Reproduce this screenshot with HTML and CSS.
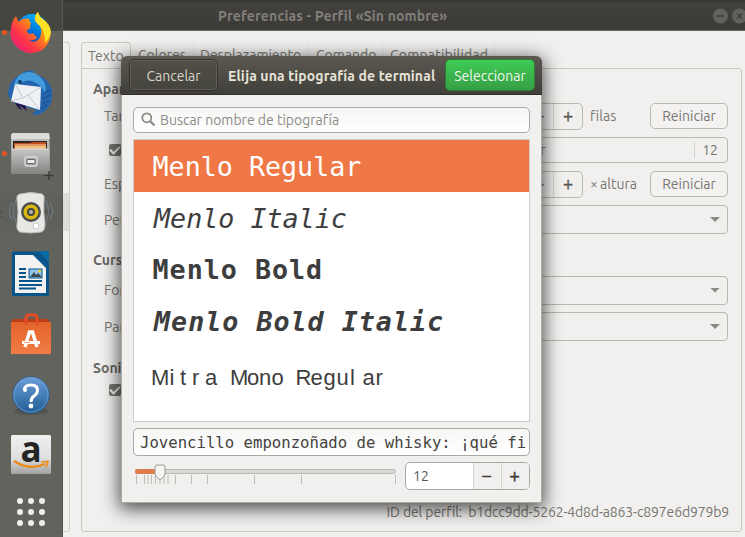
FILE: index.html
```html
<!DOCTYPE html>
<html lang="es">
<head>
<meta charset="utf-8">
<title>Preferencias</title>
<link rel="stylesheet" href="styles.css">
</head>
<body>
<div class="desktop">
  <div class="window">
    <header class="titlebar">
      <span class="window-title">Preferencias - Perfil «Sin nombre»</span>
      <svg class="window-buttons" width="32" height="16" viewBox="0 0 32 16"><circle cx="7.500" cy="8" r="7.500" fill="#62615b"/><circle cx="26.500" cy="8" r="7.500" fill="#62615b"/><path d="M4 8h7M24 5.500l5 5M29 5.500l-5 5" stroke="#3d3c38" stroke-width="1.400"/></svg>
    </header>
    <div class="content">
      <aside class="profiles"><div class="profile"><span>e</span><i class="arrow"></i></div></aside>
      <section class="notebook">
        <nav class="tabs"><span class="tab active">Texto</span><span class="tab t2">Colores</span><span class="tab t3">Desplazamiento</span><span class="tab t4">Comando</span><span class="tab t5">Compatibilidad</span></nav>
        <div class="page">
          <div class="row"><h2>Apariencia</h2></div>
          <div class="row"><label>Tamaño</label><div class="controls"><div class="spin back"><span></span><b>−</b><b>+</b></div><span class="unit">filas</span><button class="reset">Reiniciar</button></div></div>
          <div class="row"><i class="check"></i><div class="controls"><div class="font-button"><span>Menlo Regular</span><span class="size">12</span></div></div></div>
          <div class="row"><label>Espaciado</label><div class="controls"><div class="spin back"><span></span><b>−</b><b>+</b></div><span class="unit">× altura</span><button class="reset">Reiniciar</button></div></div>
          <div class="row"><label>Permitir</label><div class="combo"><i class="arrow"></i></div></div>
          <div class="row"><h2>Cursor</h2></div>
          <div class="row"><label>Forma</label><div class="combo"><i class="arrow"></i></div></div>
          <div class="row"><label>Parpadeo</label><div class="combo"><i class="arrow"></i></div></div>
          <div class="row"><h2>Sonido</h2></div>
          <div class="row"><i class="check"></i></div>
          <div class="profile-id"><span class="id-label">ID del perfil:</span><span class="id-value">b1dcc9dd-5262-4d8d-a863-c897e6d979b9</span></div>
        </div>
      </section>
    </div>
  </div>

  <aside class="launcher">
    <div class="app running"><svg width="46" height="48" viewBox="0 0 46 48">
      <defs><linearGradient id="fx" x1="0" y1="1" x2="1" y2="0"><stop offset="0" stop-color="#e31587"/><stop offset=".35" stop-color="#ff3647"/><stop offset=".65" stop-color="#ff980e"/><stop offset="1" stop-color="#fff44f"/></linearGradient><linearGradient id="fb" x1="0" y1="1" x2=".6" y2="0"><stop offset="0" stop-color="#26106f"/><stop offset=".5" stop-color="#0069d8"/><stop offset="1" stop-color="#00b2fa"/></linearGradient></defs>
      <circle cx="25" cy="21" r="16" fill="url(#fb)"/>
      <path d="M9 7Q10 10 11.500 13Q16 8 22 10Q22 12 24 14L23 17Q25 19 20 21Q20 25 24 25Q28 23 27 26Q30 27 30 29Q27 32 22 31Q27 35 32 30Q36 23 33 17L28 12Q27 6 31 3Q32 8 37 12Q43 18 43.500 26Q42 36 35 41Q24 48 12 40Q1 31 4 19Q5 12 9 7Z" fill="url(#fx)"/>
      <path d="M31 3Q27 7 29 13Q39 21 38 34Q43 29 44 23Q43 15 37 11Q32 8 31 3Z" fill="#ffe226"/>
    </svg></div>
    <div class="app"><svg width="46" height="46" viewBox="0 -1 46 46">
      <path d="M1 22Q2 10 14 4Q19 -1 28 1L25 3Q40 6 45 19Q47 34 38 41Q34 45 25 45L29 40L8 33Q1 29 1 22Z" fill="#2465ae"/>
      <path d="M14 4Q26-2 35 9Q40 15 38 23Q34 14 25 11Q18 9 12 15Q9 13 7 15Q9 7 14 4Z" fill="#419bdd"/><path d="M8 33Q11 39 15 40L12 35L20 41L18 35Z" fill="#21194e"/>
      <path d="M8 14L34 17L33 40L4 31Z" fill="#eef0f4"/><path d="M8 14L16 28L34 17M16 28L4 31M21 25L33 40" fill="none" stroke="#c5c9d1" stroke-width="1"/><circle cx="13" cy="12" r="2" fill="#153b68"/>
      <path d="M36 24l7-4M35 29l9-4M35 34l8-4M34 39l6-4" stroke="#194780" stroke-width="1"/>
    </svg></div>
    <div class="app running"><svg width="46" height="48" viewBox="0 -1 46 48">
      <defs><linearGradient id="cab" x2="0" y2="1"><stop stop-color="#c6c6c4"/><stop offset="1" stop-color="#858583"/></linearGradient></defs>
      <path d="M4 3h38l1 17v23H4Z" fill="url(#cab)"/><path d="M5 2h37l1 6H4Z" fill="#dcdcda"/><path d="M6 10h34v9H6Z" fill="#292522"/><path d="M7 12h16l2-1h14v8H7Z" fill="#c34b20"/><path d="M8 15h31v4H8Z" fill="#f5bd7d"/><path d="M8 14h31" stroke="#ffe0ac"/><path d="M5 18h37v24H5Z" fill="url(#cab)"/><path d="M5 18h37" stroke="#d8d8d6"/>
      <rect x="18" y="26" width="12" height="9" rx="2" fill="#a1a19f" stroke="#dedede" stroke-width="1.300"/><rect x="20" y="28.500" width="8" height="4" rx="1" fill="#eee" stroke="#666"/><path d="M42 40v9M37.500 44.500h9" stroke="#3c3b37" stroke-width="1.500"/>
    </svg></div>
    <div class="app"><svg width="46" height="46" viewBox="0 0 46 46">
      <g fill="none" stroke="#6f8090" stroke-width="1"><path d="M9 10Q4 21 9 32M5 12Q0 21 5 30M39 10Q44 21 39 32M43 12Q48 21 43 30"/></g>
      <path d="M13 4Q24 1 35 4Q38 5 37 10Q36 22 38 34Q38 41 34 42Q24 44 13 42Q9 40 10 34Q12 22 10 10Q9 5 13 4Z" fill="#e7e7e4" stroke="#bbb"/><circle cx="24" cy="22" r="10" fill="#4c4e50"/><circle cx="24" cy="22" r="7.500" fill="#d9b90d"/><circle cx="24" cy="22" r="4" fill="#45483c"/><circle cx="24" cy="22" r="2" fill="#b1b4b8"/><circle cx="29" cy="36" r="3" fill="#fff" stroke="#ccc"/>
    </svg></div>
    <div class="app"><svg width="46" height="48" viewBox="0 0 46 48">
      <path d="M7 1.500h25L42 12v32q0 2-2 2H7q-2 0-2-2V3.500q0-2 2-2Z" fill="#07558b"/><path d="M31 1h11v11Z" fill="#0769a5"/><path d="M8 5h18l13 13v25H8Z" fill="#f2f2f2"/>
      <path d="M12 19h7M12 23h7M12 27h7M12 31h23M12 35h23M12 38.500h17" stroke="#07558b" stroke-width="2"/><rect x="22" y="19" width="13" height="9" fill="#8fc5eb" stroke="#07558b"/><path d="M23 27l4-5 2 3 2-2 4 4Z" fill="#3e4a50"/><circle cx="32.500" cy="21" r="1.500" fill="#f4cf2d"/>
    </svg></div>
    <div class="app"><svg width="46" height="46" viewBox="0 -2 46 46">
      <defs><linearGradient id="bag" x2="0" y2="1"><stop stop-color="#e36328"/><stop offset="1" stop-color="#f17c46"/></linearGradient></defs>
      <path d="M6 7h35l2 4H4Z" fill="#b93d17"/><path d="M4 10h40v32H4Z" fill="url(#bag)"/><path d="M19 13V6q0-3 3-3h5q3 0 3 3v7" fill="none" stroke="#e44c24" stroke-width="3"/><path d="M18 35L22.500 20h3L30 35" fill="none" stroke="#fff" stroke-width="3.500"/><path d="M15 30.500h18" stroke="#fff" stroke-width="3"/><path d="M17 30.500h6" stroke="#f7a27b" stroke-width="1"/>
    </svg></div>
    <div class="app"><svg width="46" height="46" viewBox="0 -2 46 46">
      <defs><linearGradient id="help" x2="0" y2="1"><stop stop-color="#6b9fd9"/><stop offset="1" stop-color="#225e96"/></linearGradient></defs>
      <ellipse cx="24" cy="38" rx="17" ry="4" fill="#464540" opacity=".5"/><circle cx="24" cy="22" r="18.300" fill="url(#help)" stroke="#245687" stroke-width=".7"/><circle cx="24" cy="22" r="17" fill="none" stroke="#76a7d9" stroke-width=".7"/>
      <path d="M17.500 17.500Q17 12 24 12Q30.500 12 30.500 17Q30.500 20.500 27 23Q24 25 24 29" fill="none" stroke="#fff" stroke-width="3"/><circle cx="18" cy="17" r="2" fill="#fff"/><circle cx="24" cy="33" r="2.400" fill="#fff"/>
    </svg></div>
    <div class="app"><svg width="46" height="46" viewBox="0 -2 46 46">
      <defs><linearGradient id="amz" x2="0" y2="1"><stop stop-color="#f0f0f0"/><stop offset=".6" stop-color="#dedede"/><stop offset="1" stop-color="#a2a2a2"/></linearGradient></defs>
      <rect x="4" y="2" width="40" height="39" rx="1.500" fill="url(#amz)"/><text class="amazon-a" x="13.500" y="28.500">a</text>
      <path d="M7 28Q22 38 38 31" fill="none" stroke="#ed8c16" stroke-width="2.300"/><path d="M34 29l7-.5-2 6" fill="none" stroke="#ed8c16" stroke-width="1.700"/>
    </svg></div>
    <div class="app"><svg width="46" height="46" viewBox="0 1 46 46" fill="#f0efed"><circle cx="13" cy="11" r="3"/><circle cx="24" cy="11" r="3"/><circle cx="35" cy="11" r="3"/><circle cx="13" cy="22" r="3"/><circle cx="24" cy="22" r="3"/><circle cx="35" cy="22" r="3"/><circle cx="13" cy="33" r="3"/><circle cx="24" cy="33" r="3"/><circle cx="35" cy="33" r="3"/></svg></div>
  </aside>

  <div class="dialog">
    <header class="dialog-head"><button class="cancel">Cancelar</button><strong>Elija una tipografía de terminal</strong><button class="select">Seleccionar</button></header>
    <div class="dialog-body">
      <div class="search"><svg width="15" height="15" viewBox="0 0 15 15" fill="none" stroke="#8b8a85"><circle cx="5.800" cy="5.800" r="4.500" stroke-width="1.800"/><path d="M9 9l4.500 4.500" stroke-width="2.200"/></svg><span>Buscar nombre de tipografía</span></div>
      <div class="fonts">
        <div class="font selected">Menlo Regular</div>
        <div class="font italic">Menlo Italic</div>
        <div class="font bold">Menlo Bold</div>
        <div class="font bold italic">Menlo Bold Italic</div>
        <div class="font mitra"><svg width="260" height="40"><text y="25" x="-2 16.500 27 39 52 66 77 94 106 118.500 131 142.500 157.500 170.500 183.500 197 209.500 222.500">Mitra Mono Regular</text></svg></div>
      </div>
      <div class="preview">Jovencillo emponzoñado de whisky: ¡qué fi</div>
      <div class="sizer">
        <svg width="264" height="28" viewBox="0 -1 264 28"><rect x="2.500" y="6.500" width="260" height="4" rx="2" fill="#d9d8d6" stroke="#bab9b6"/><rect x="2" y="6" width="25" height="5" rx="2" fill="#e17b4e"/><path d="M3.500 12v9M11.500 12v9M15 12v9M18.500 12v9M22.500 12v9M27 12v9M31 12v9M35 12v9M42.500 12v9M58.500 12v9M74.500 12v9M121.500 12v9M168.500 12v9M262.500 12v9" stroke="#bebdb9"/><path d="M24 2h6q2 0 2 2v7q0 2-5 6-5-4-5-6V4q0-2 2-2Z" fill="#f4f4f3" stroke="#999894"/></svg>
        <div class="spin front"><span>12</span><b>−</b><b>+</b></div>
      </div>
    </div>
  </div>
</div>
</body>
</html>
```
FILE: styles.css
```css
* { box-sizing: border-box; }
body { margin: 0; font-family: Ubuntu, "Noto Sans", sans-serif; font-size: 14px; color: #777671; font-variant-ligatures: none; }
button { font: inherit; padding: 0; margin: 0; }
.desktop { position: relative; width: 745px; height: 537px; overflow: hidden; background: #f1f0ee; }
.titlebar { height: 31px; display: flex; align-items: center; padding: 2px 0 0 218px; background: linear-gradient(#383733 0 2px, #42413d 3px, #3b3a36); border-bottom: 1px solid #66655f; }
.window-title { width: 495px; font-weight: bold; color: #817f77; white-space: nowrap; letter-spacing: .15px; }
.window-buttons { flex: none; }
.content { display: flex; gap: 11px; padding-top: 11px; }
.profiles { width: 70px; height: 490px; border: 1px solid #d1d0cc; border-left: 0; border-radius: 0 3px 3px 0; padding-top: 150px; }
.profile { height: 38px; display: flex; align-items: center; justify-content: space-between; background: #dddcd9; padding-right: 16px; margin-left: -4px; }
.arrow { width: 10px; height: 5px; background: #8b8a85; clip-path: polygon(0 0, 100% 0, 50% 100%); }
.notebook { width: 661px; height: 490px; display: flex; flex-direction: column; }
.tabs { height: 26px; display: flex; align-items: center; white-space: nowrap; }
.tab { height: 26px; line-height: 26px; border-right: 1px solid #e5e4e1; }
.tab.active { width: 50px; border: 1px solid #c9c8c4; border-bottom: 0; border-radius: 4px 4px 0 0; padding-left: 6px; }
.t2 { width: 63px; padding-left: 7px; } .t3 { width: 115px; padding-left: 6px; } .t4 { width: 74px; padding-left: 7px; } .t5 { width: 112px; padding-left: 7px; letter-spacing: .2px; }
.page { height: 464px; border: 1px solid #c9c8c4; border-radius: 0 3px 3px 3px; padding: 6px 13px 0 12px; display: grid; grid-template-rows: 27px 28px 40px 28px 43px 38px 22px 51px 32px 12px 1fr; }
.row { display: flex; align-items: center; padding-left: 10px; }
.row h2 { margin: 0 0 0 -11px; font-size: 14px; color: #6a6965; }
.row label { width: 115px; }
.controls { flex: 1; display: flex; align-items: center; justify-content: flex-end; }
.spin { display: flex; border: 1px solid #b9b8b4; border-radius: 5px; }
.spin b { border-left: 1px solid #d4d3d0; display: flex; align-items: center; justify-content: center; font-weight: 400; }
.spin.back { width: 180px; height: 27px; color: #5d5c58; }
.spin span { flex: 1; }
.spin.back b { width: 29px; font-size: 18px; padding-bottom: 3px; -webkit-text-stroke: .4px #5d5c58; }
.unit { width: 67px; padding-left: 7px; white-space: nowrap; word-spacing: -1px; }
.reset { width: 78px; height: 26px; border: 1px solid #b9b8b4; border-radius: 5px; background: #f3f2f0; color: #777671; }
.check { width: 12px; height: 12px; border-radius: 2px; background: #777671; margin-left: 5px; display: flex; align-items: center; justify-content: center; }
.check::after { content: ""; width: 8px; height: 4px; border: solid #f0f0ee; border-width: 0 0 2px 2px; transform: translateY(-1px) rotate(-45deg); }
.font-button { width: 275px; height: 26px; border: 1px solid #b9b8b4; border-radius: 4px; display: flex; justify-content: space-between; align-items: center; padding: 0 9px 0 0; }
.font-button .size { border-left: 1px solid #d4d3d0; padding-left: 7px; line-height: 16px; }
.combo { flex: 1; height: 29px; border: 1px solid #b9b8b4; border-radius: 4px; display: flex; align-items: center; justify-content: flex-end; padding-right: 7px; }
.profile-id { align-self: end; justify-self: end; white-space: nowrap; margin: 0 -1px 10px 0; display: flex; gap: 6px; line-height: 18px; }
.id-label { letter-spacing: -.1px; }
.id-value { letter-spacing: -.15px; }
.launcher { position: absolute; left: 0; top: 0; width: 63px; height: 537px; background: rgba(72, 71, 66, .84); border-right: 1px solid #565550; padding: 9px 0 0 7px; }
.app { position: relative; height: 60.3px; display: flex; align-items: flex-start; }
.app svg { flex: none; overflow: visible; }
.running::before { content: ""; position: absolute; left: -5px; top: 21px; width: 5px; height: 5px; border-radius: 50%; background: #e95420; }
.amazon-a { font: bold 35px "Open Sans", sans-serif; fill: #252525; }
.dialog { position: absolute; left: 121px; top: 56px; width: 421px; height: 447px; border-radius: 6px 6px 0 0; background: #f1f0ee; border: 1px solid #aaa9a5; border-top: 0; box-shadow: 0 4px 18px 2px rgba(0, 0, 0, .68); }
.dialog-head { height: 39px; margin: 0 -1px; display: flex; align-items: center; border-radius: 6px 6px 0 0; padding: 0 7px 0 8px; background: linear-gradient(#5b5950, #403f3a); border-bottom: 1px solid #302f2c; color: #e6e2d8; white-space: nowrap; }
.dialog-head strong { padding: 1px 0 0 10px; letter-spacing: .12px; }
.dialog-head button { height: 32px; border-radius: 5px; padding-top: 2px; }
.cancel { width: 89px; background: linear-gradient(#514f47, #45443e); border: 1px solid #33322d; color: #d8d4c8; box-shadow: 0 0 0 1px #605e55 inset; }
.select { width: 90px; margin-left: auto !important; background: linear-gradient(#3ecb55, #379f45); border: 1px solid #2c7d36; color: #f4f7ee; }
.dialog-body { padding: 12px 11px 0; }
.search, .preview { height: 27px; border: 1px solid #aaa9a5; border-radius: 5px; background: linear-gradient(#f6f6f5, #fff); display: flex; align-items: center; }
.search { height: 26px; padding-left: 7px; gap: 4px; color: #8b8a86; }
.search svg { margin-bottom: 2px; }
.fonts { margin-top: 6px; height: 283px; border: 1px solid #cecdc9; background: #fff; overflow: hidden; }
.font { height: 51.700px; padding-left: 18.5px; line-height: 53px; font-family: "DejaVu Sans Mono", monospace; font-size: 26.700px; color: #3d3d3d; white-space: pre; }
.selected { color: #fff; background: #f07746; }
.italic { font-style: italic; padding-left: 20px; }
.bold { font-weight: bold; letter-spacing: 1px; }
.mitra { line-height: 0; padding-top: 13px; }
.mitra svg { overflow: visible; }
.mitra text { font: 22px "Liberation Sans", sans-serif; fill: #3d3d3d; }
.preview { height: 28px; margin-top: 6px; padding-left: 6px; font: 15.650px/25px "DejaVu Sans Mono", monospace; color: #44433f; overflow: hidden; white-space: pre; }
.sizer { display: flex; align-items: center; justify-content: space-between; margin-top: 6px; }
.spin.front { width: 125px; height: 28px; background: #fff; color: #55544f; border-color: #aaa9a5; line-height: 26px; overflow: hidden; }
.front span { padding-left: 7px; }
.front b { width: 28px; font-size: 19px; background: #f1f0ee; color: #3d3c38; padding: 0 2px 3px 0; -webkit-text-stroke: .4px #3d3c38; }
```
